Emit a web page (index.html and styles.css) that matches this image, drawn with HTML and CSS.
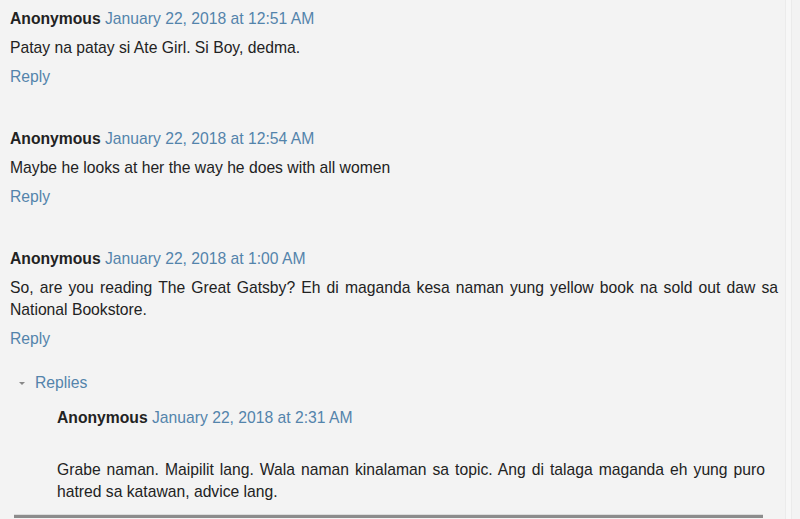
FILE: index.html
```html
<!DOCTYPE html>
<html lang="en">
<head>
  <meta charset="UTF-8">
  <title>Comments</title>
  <link rel="stylesheet" href="styles.css">
</head>
<body>
  <div class="page">
    <div class="comments">

      <div class="comment">
        <div class="comment-header">
          <span class="user">Anonymous</span>
          <a class="date" href="#">January 22, 2018 at 12:51 AM</a>
        </div>
        <p class="comment-body">Patay na patay si Ate Girl. Si Boy, dedma.</p>
        <a class="reply" href="#">Reply</a>
      </div>

      <div class="comment">
        <div class="comment-header">
          <span class="user">Anonymous</span>
          <a class="date" href="#">January 22, 2018 at 12:54 AM</a>
        </div>
        <p class="comment-body">Maybe he looks at her the way he does with all women</p>
        <a class="reply" href="#">Reply</a>
      </div>

      <div class="comment">
        <div class="comment-header">
          <span class="user">Anonymous</span>
          <a class="date" href="#">January 22, 2018 at 1:00 AM</a>
        </div>
        <p class="comment-body">So, are you reading The Great Gatsby? Eh di maganda kesa naman yung yellow book na sold out daw sa National Bookstore.</p>
        <a class="reply" href="#">Reply</a>

        <div class="thread">
          <a class="thread-toggle" href="#"><span class="arrow"></span>Replies</a>
          <div class="thread-chain">
            <div class="comment nested">
              <div class="comment-header">
                <span class="user">Anonymous</span>
                <a class="date" href="#">January 22, 2018 at 2:31 AM</a>
              </div>
              <p class="comment-body">Grabe naman. Maipilit lang. Wala naman kinalaman sa topic. Ang di talaga maganda eh yung puro hatred sa katawan, advice lang.</p>
            </div>
          </div>
          <div class="reply-box"></div>
        </div>
      </div>

    </div>
    <div class="sidebar-edge"></div>
  </div>
</body>
</html>
```

FILE: styles.css
```css
body {
  margin: 0;
  background: #f3f3f3;
  font-family: "Liberation Sans", Arial, sans-serif;
  font-size: 15.7px;
  line-height: 22px;
  color: #222;
}
a {
  color: #5384ab;
  text-decoration: none;
}
.page {
  display: flex;
  height: 519px;
  overflow: hidden;
}
.comments {
  width: 768px;
  padding: 8px 0 0 10px;
}
.sidebar-edge {
  margin-left: 7px;
  width: 5px;
  background: #f7f7f7;
  border-left: 1px solid #ebebeb;
  border-right: 1px solid #ebebeb;
}
.comment {
  margin-bottom: 40px;
}
.user {
  font-weight: bold;
}
.comment-body {
  margin: 7px 0;
  text-align: justify;
}
.reply {
  display: block;
}
.thread {
  margin-top: 22px;
}
.thread-toggle {
  display: flex;
  align-items: center;
  margin-left: 9px;
}
.arrow {
  width: 0;
  height: 0;
  border-left: 3px solid transparent;
  border-right: 3px solid transparent;
  border-top: 3px solid #888;
  margin-right: 10px;
}
.thread-chain {
  margin: 13px 13px 0 47px;
}
.comment.nested {
  margin-bottom: 0;
}
.nested .comment-body {
  margin-top: 30px;
}
.reply-box {
  margin: 11px 15px 0 4px;
  height: 20px;
  border-top: 1px solid #dcdcdc;
  box-shadow: inset 0 3px 0 #8c8c8c;
}
```
